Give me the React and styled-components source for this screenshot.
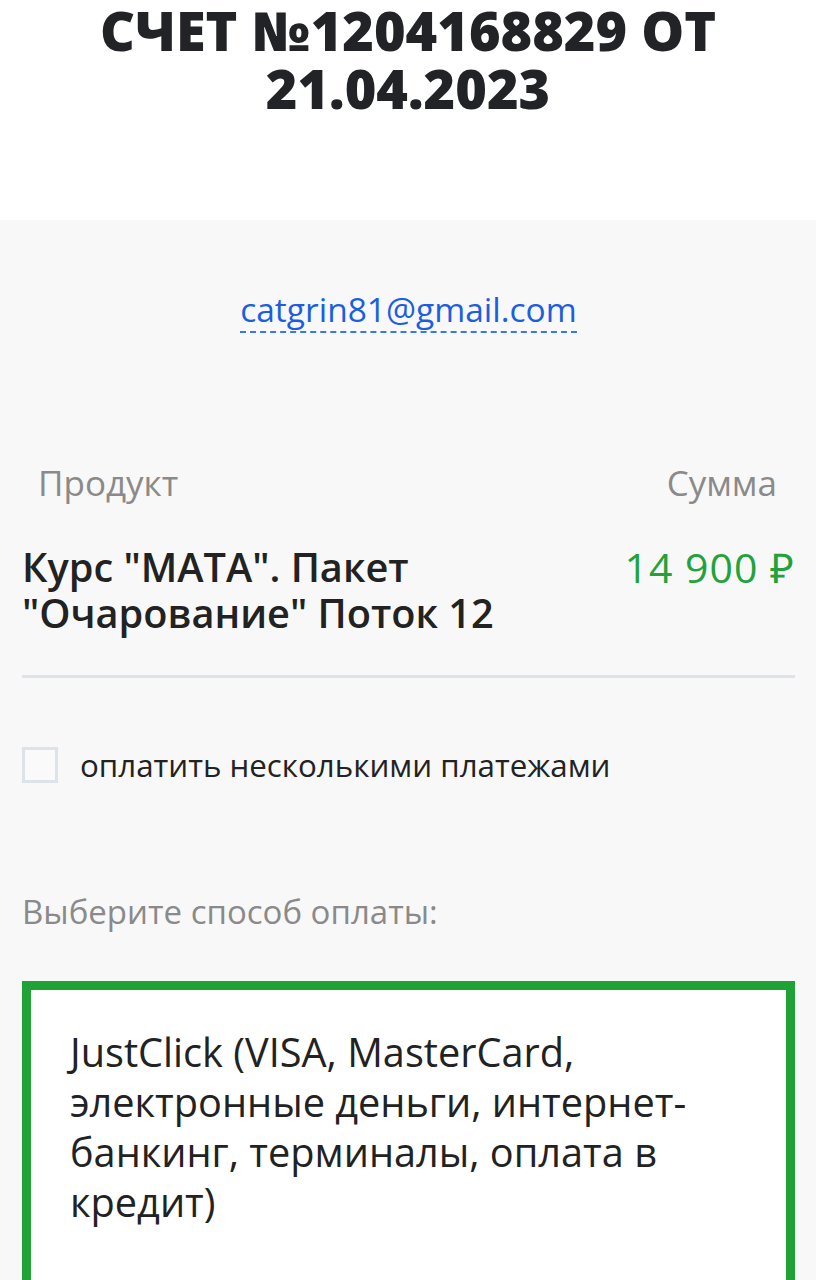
import React from 'react';
import styled, { createGlobalStyle } from 'styled-components';

const GlobalStyle = createGlobalStyle`
  html, body {
    margin: 0;
    padding: 0;
    background: #f8f8f8;
  }
  body {
    font-family: "Open Sans", "Liberation Sans", sans-serif;
    color: #222;
  }
`;

const Page = styled.div`
  width: 816px;
  min-height: 1280px;
  background: #f8f8f8;
`;

const Header = styled.header`
  background: #fff;
  height: 220px;
  display: flex;
  justify-content: center;
  padding-top: 1px;
  box-sizing: border-box;
`;

const Title = styled.h1`
  margin: 0;
  font-size: 54px;
  line-height: 58px;
  font-weight: 800;
  text-align: center;
  color: #222326;
  width: 700px;
`;

const Body = styled.main`
  padding: 0 21px 0 22px;
`;

const EmailRow = styled.div`
  display: flex;
  justify-content: center;
  padding-top: 69px;
`;

const Email = styled.a`
  font-size: 33.5px;
  line-height: 40px;
  color: #1b5fe0;
  text-decoration: none;
  border-bottom: 2px dashed #3a78ea;
  padding-bottom: 2px;
`;

const TableHead = styled.div`
  display: flex;
  justify-content: space-between;
  padding: 129px 18px 0 16px;
`;

const HeadCell = styled.span`
  font-size: 35px;
  line-height: 42px;
  color: #8a8a8a;
`;

const ItemRow = styled.div`
  display: flex;
  justify-content: space-between;
  align-items: flex-start;
  padding: 40px 0 39px;
  border-bottom: 3px solid #dde3e8;
`;

const ItemName = styled.div`
  font-size: 39.7px;
  line-height: 46px;
  font-weight: 600;
  color: #222;
  width: 560px;
`;

const Price = styled.div`
  font-size: 41px;
  line-height: 46px;
  font-weight: 500;
  letter-spacing: 1px;
  color: #22a23a;
  white-space: nowrap;
`;

const CheckRow = styled.label`
  display: flex;
  align-items: center;
  gap: 22px;
  margin-top: 67px;
`;

const Box = styled.span`
  width: 36px;
  height: 36px;
  box-sizing: border-box;
  border: 3px solid #dde3e8;
  background: #fafafa;
  flex-shrink: 0;
`;

const CheckText = styled.span`
  font-size: 31.3px;
  line-height: 40px;
  color: #222;
`;

const MethodsLabel = styled.div`
  margin-top: 107px;
  font-size: 33px;
  line-height: 40px;
  color: #8a8a8a;
`;

const MethodCard = styled.div`
  margin-top: 49px;
  border: 9px solid #21a236;
  border-bottom: none;
  background: #fff;
  padding: 37px 40px 80px 39px;
  min-height: 300px;
`;

const MethodText = styled.div`
  font-size: 39.7px;
  line-height: 50px;
  color: #222;
`;

export default function App() {
  return (
    <Page>
      <GlobalStyle />
      <Header>
        <Title>СЧЕТ №1204168829 ОТ 21.04.2023</Title>
      </Header>
      <Body>
        <EmailRow>
          <Email href="#">catgrin81@gmail.com</Email>
        </EmailRow>
        <TableHead>
          <HeadCell>Продукт</HeadCell>
          <HeadCell>Сумма</HeadCell>
        </TableHead>
        <ItemRow>
          <ItemName>Курс "МАТА". Пакет "Очарование" Поток 12</ItemName>
          <Price>14 900 ₽</Price>
        </ItemRow>
        <CheckRow>
          <Box />
          <CheckText>оплатить несколькими платежами</CheckText>
        </CheckRow>
        <MethodsLabel>Выберите способ оплаты:</MethodsLabel>
        <MethodCard>
          <MethodText>
            JustClick (VISA, MasterCard, электронные деньги, интернет-банкинг, терминалы, оплата в кредит)
          </MethodText>
        </MethodCard>
      </Body>
    </Page>
  );
}
